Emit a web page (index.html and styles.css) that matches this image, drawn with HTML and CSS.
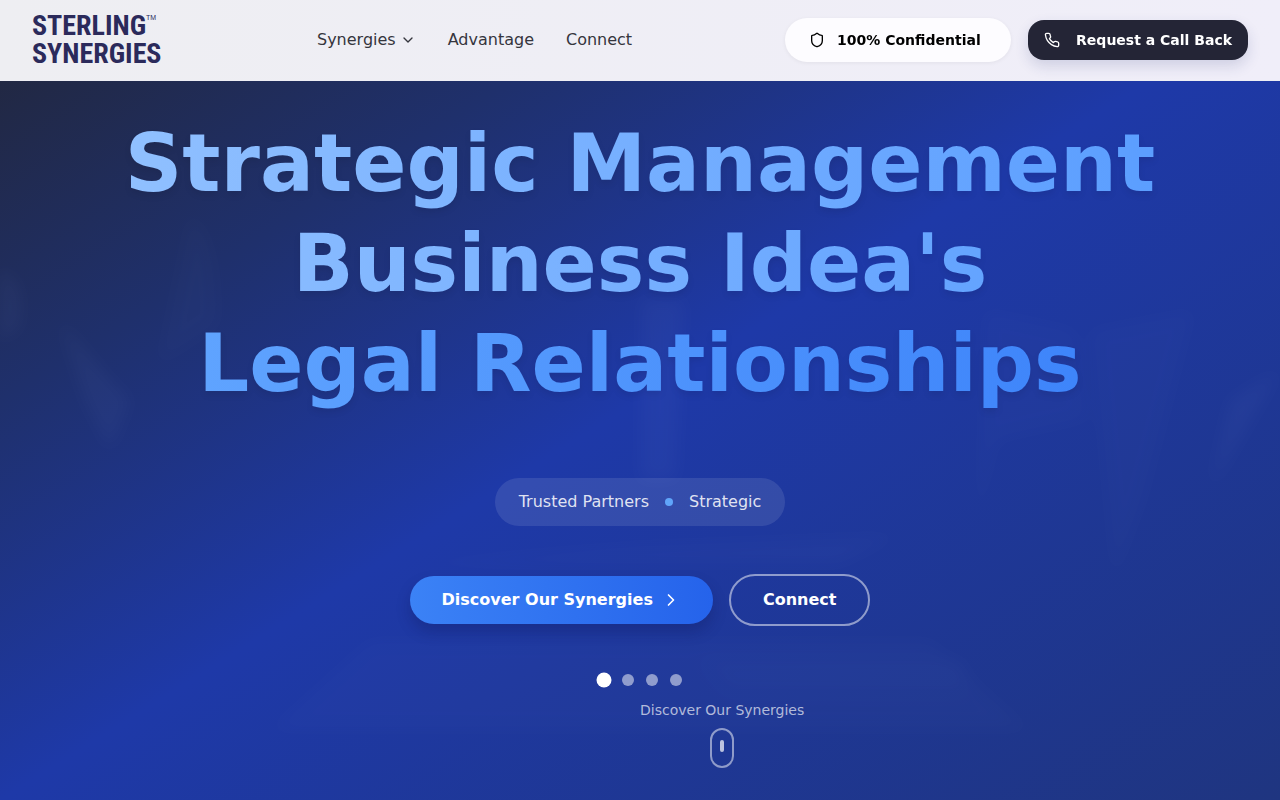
FILE: index.html
```html
<!DOCTYPE html>
<html lang="en">
<head>
    <meta charset="UTF-8">
    <meta name="viewport" content="width=device-width, initial-scale=1.0">
    <title>Sterling Synergies</title>
    <link rel="stylesheet" href="styles.css">
</head>
<body>
    <header class="header">
        <a href="#" class="logo">
            <span class="logo-line">STERLING<span class="logo-tm">TM</span></span>
            <span class="logo-line">SYNERGIES</span>
        </a>
        <nav class="nav">
            <a href="#synergies" class="nav-link">Synergies
                <svg class="icon-small" viewBox="0 0 24 24" fill="none" stroke="currentColor" stroke-width="2" stroke-linecap="round" stroke-linejoin="round"><path d="m6 9 6 6 6-6"/></svg>
            </a>
            <a href="#advantage" class="nav-link">Advantage</a>
            <a href="#connect" class="nav-link">Connect</a>
        </nav>
        <div class="header-actions">
            <div class="confidential">
                <svg class="icon-small" viewBox="0 0 24 24" fill="none" stroke="currentColor" stroke-width="2" stroke-linecap="round" stroke-linejoin="round"><path d="M20 13c0 5-3.500 7.500-7.660 8.950a1 1 0 0 1-.67-.01C7.500 20.500 4 18 4 13V6a1 1 0 0 1 1-1c2 0 4.500-1.200 6.240-2.720a1.170 1.170 0 0 1 1.520 0C14.510 3.810 17 5 19 5a1 1 0 0 1 1 1z"/></svg>
                <span>100% Confidential</span>
            </div>
            <button type="button" class="callback">
                <svg class="icon-small" viewBox="0 0 24 24" fill="none" stroke="currentColor" stroke-width="2" stroke-linecap="round" stroke-linejoin="round"><path d="M22 16.920v3a2 2 0 0 1-2.180 2 19.790 19.790 0 0 1-8.630-3.070 19.500 19.500 0 0 1-6-6 19.790 19.790 0 0 1-3.070-8.670A2 2 0 0 1 4.110 2h3a2 2 0 0 1 2 1.720 12.840 12.840 0 0 0 .7 2.810 2 2 0 0 1-.45 2.110L8.090 9.910a16 16 0 0 0 6 6l1.270-1.270a2 2 0 0 1 2.110-.45 12.840 12.840 0 0 0 2.810.7A2 2 0 0 1 22 16.920z"/></svg>
                Request a Call Back
            </button>
        </div>
    </header>

    <main class="hero">
        <!-- faint office scene behind the text -->
        <svg class="hero-scene" viewBox="0 0 1280 800" preserveAspectRatio="xMidYMid slice" aria-hidden="true">
            <g fill="#7d8fd0">
                <path d="M0 270q28 10 18 60l-18 10z"/>
                <path d="M60 320l50 60 20 20-20 50-25-50z"/>
                <path d="M190 215q30 20 28 110l-60 40z" opacity=".5"/>
                <path d="M642 300h42l-8 180h-36z"/>
                <path d="M985 310l90 20 12 90-90 20-20 90z" opacity=".5"/>
                <path d="M1090 330l24 250 30-80 50-190z" opacity=".5"/>
                <path d="M1280 370l-70 120 20-90z"/>
                <path d="M640 545l260-10-60 30H380z" opacity=".6"/>
                <path d="M370 640h560l100 90H270z" opacity=".5"/>
                <path d="M705 660h260v30H730z" opacity=".6"/>
            </g>
        </svg>
        <div class="hero-content">
            <h1 class="title">
                <span class="title-top">Strategic Management<br>Business Idea's</span>
                <span class="title-bottom">Legal Relationships</span>
            </h1>
            <div class="tagline">
                <span>Trusted Partners</span>
                <span class="tagline-dot"></span>
                <span>Strategic</span>
            </div>
            <div class="hero-buttons">
                <button type="button" class="btn btn-primary">Discover Our Synergies
                    <svg class="icon-medium" viewBox="0 0 24 24" fill="none" stroke="currentColor" stroke-width="2" stroke-linecap="round" stroke-linejoin="round"><path d="m9 18 6-6-6-6"/></svg>
                </button>
                <button type="button" class="btn btn-outline">Connect</button>
            </div>
            <div class="slides">
                <button type="button" class="slide-dot active" aria-label="Slide 1"></button>
                <button type="button" class="slide-dot" aria-label="Slide 2"></button>
                <button type="button" class="slide-dot" aria-label="Slide 3"></button>
                <button type="button" class="slide-dot" aria-label="Slide 4"></button>
            </div>
        </div>
        <!-- scroll hint -->
        <div class="scroll-hint">
            <span>Discover Our Synergies</span>
            <div class="mouse"><div class="mouse-wheel"></div></div>
        </div>
    </main>
</body>
</html>
```
FILE: styles.css
```css
* {
    box-sizing: border-box;
}
body {
    margin: 0;
    font-family: "DejaVu Sans", sans-serif;
    font-size: 16px;
    line-height: 24px;
    color: #fff;
}
a {
    color: inherit;
    text-decoration: none;
}
button {
    font: inherit;
    border: none;
    cursor: pointer;
}
.icon-small {
    width: 16px;
    height: 16px;
}
.icon-medium {
    width: 20px;
    height: 20px;
}

/* header */
.header {
    position: fixed;
    top: 0;
    left: 0;
    right: 0;
    z-index: 10;
    display: flex;
    align-items: center;
    justify-content: space-between;
    padding: 12px 32px;
    border-bottom: 1px solid #eeeef4;
    background: linear-gradient(to right, #eeeef2, #f0eef9);
}
.logo {
    width: 132px;
    color: #2b2a5b;
    font-family: "Roboto Condensed", "Liberation Sans Narrow", "Liberation Sans", sans-serif;
    font-size: 28px;
    font-weight: bold;
    line-height: 28px;
    white-space: nowrap;
}
.logo-line {
    display: flex;
}
.logo-tm {
    font-family: "Liberation Sans", sans-serif;
    font-size: 7px;
    font-weight: normal;
    line-height: 12px;
}
.nav {
    display: flex;
    gap: 32px;
    color: #35353d;
}
.nav-link {
    display: flex;
    align-items: center;
    gap: 4px;
}
.header-actions {
    display: flex;
    align-items: center;
    gap: 17px;
    font-size: 14px;
    font-weight: bold;
    line-height: 20px;
}
.confidential {
    display: flex;
    align-items: center;
    gap: 12px;
    min-width: 226px;
    padding: 12px 24px;
    border-radius: 24px;
    background: #fdfcff;
    color: #000;
    box-shadow: 0 1px 4px rgba(0, 0, 0, 0.06);
}
.callback {
    display: flex;
    align-items: center;
    gap: 16px;
    padding: 10px 16px;
    border-radius: 16px;
    background: #242536;
    color: #fff;
    box-shadow: 0 6px 14px rgba(40, 50, 120, 0.16);
}

/* hero */
.hero {
    position: relative;
    display: flex;
    align-items: center;
    justify-content: center;
    min-height: 100vh;
    overflow: hidden;
    background: linear-gradient(to bottom right, #222639, #1f306c 25%, #1e39a8 50%, #1f3580);
}
.hero-scene {
    position: absolute;
    inset: 0;
    width: 100%;
    height: 100%;
    opacity: 0.06;
    filter: blur(8px);
}
.hero-content {
    position: relative;
    display: flex;
    flex-direction: column;
    align-items: center;
    gap: 48px;
}
.title {
    margin: 0 0 16px;
    font-size: 80px;
    font-weight: bold;
    line-height: 100px;
    text-align: center;
}
.title-top,
.title-bottom {
    display: block;
    background-clip: text;
    -webkit-background-clip: text;
    color: transparent;
    filter: drop-shadow(0 4px 3px rgba(0, 0, 0, 0.07));
}
.title-top {
    background-image: linear-gradient(to right, #90c0ff, #5b9eff);
}
.title-bottom {
    background-image: linear-gradient(to right, #62a6ff, #3b82fa);
}
.tagline {
    display: flex;
    align-items: center;
    gap: 16px;
    padding: 12px 24px;
    border-radius: 24px;
    background: rgba(255, 255, 255, 0.1);
    color: rgba(255, 255, 255, 0.86);
}
.tagline-dot {
    width: 8px;
    height: 8px;
    border-radius: 50%;
    background: #60a5fa;
}
.hero-buttons {
    display: flex;
    align-items: center;
    gap: 16px;
}
.btn {
    display: flex;
    align-items: center;
    gap: 8px;
    padding: 12px 32px;
    border-radius: 26px;
    color: #fff;
    font-weight: bold;
}
.btn-primary {
    background: linear-gradient(to right, #3b82f6, #2563eb);
    box-shadow: 0 8px 14px rgba(10, 20, 80, 0.25);
}
.btn-outline {
    border: 2px solid rgba(255, 255, 255, 0.5);
    background: transparent;
}
.slides {
    display: flex;
    gap: 12px;
}
.slide-dot {
    width: 12px;
    height: 12px;
    padding: 0;
    border-radius: 50%;
    background: rgba(255, 255, 255, 0.5);
}
.slide-dot.active {
    background: #fff;
    transform: scale(1.25);
}
.scroll-hint {
    position: absolute;
    left: 50%;
    bottom: 32px;
    display: flex;
    flex-direction: column;
    align-items: center;
    gap: 8px;
    color: rgba(255, 255, 255, 0.66);
    font-size: 14px;
    line-height: 20px;
}
.mouse {
    display: flex;
    justify-content: center;
    width: 24px;
    height: 40px;
    padding-top: 10px;
    border: 2px solid rgba(255, 255, 255, 0.5);
    border-radius: 12px;
}
.mouse-wheel {
    width: 4px;
    height: 12px;
    border-radius: 2px;
    background: rgba(255, 255, 255, 0.7);
}
```
